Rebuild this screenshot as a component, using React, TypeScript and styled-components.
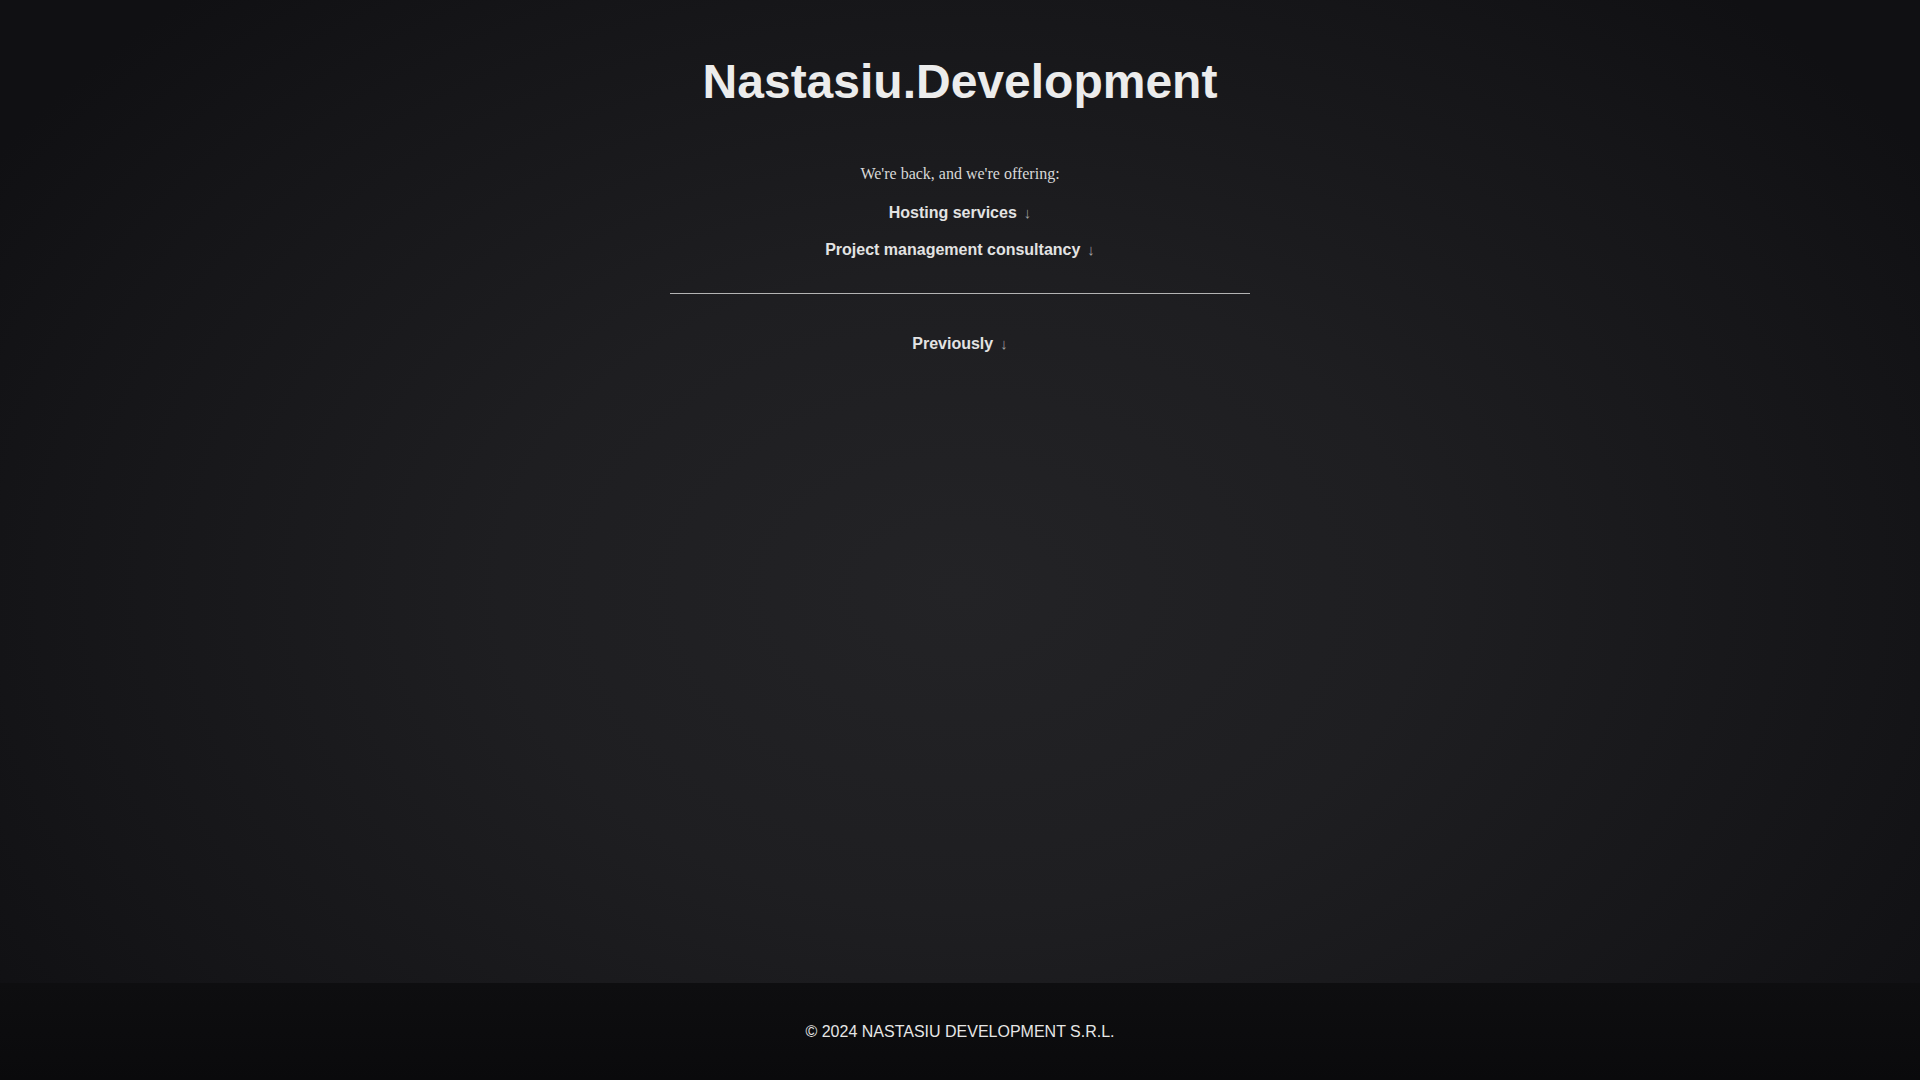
import React from "react";
import styled, { createGlobalStyle } from "styled-components";

const GlobalStyle = createGlobalStyle`
  html, body {
    margin: 0;
    padding: 0;
    height: 100%;
    background: #111114;
  }
  #root {
    min-height: 100vh;
  }
  * {
    box-sizing: border-box;
  }
`;

const Page = styled.div`
  min-height: 100vh;
  display: flex;
  flex-direction: column;
  font-family: "Liberation Sans", Arial, sans-serif;
`;

const Main = styled.main`
  flex: 1;
  display: flex;
  flex-direction: column;
  align-items: center;
  padding-top: 54px;
  background:
    radial-gradient(
      ellipse 1150px 800px at 50% 60%,
      #232326 0%,
      #1e1e21 40%,
      #151518 80%,
      #101013 100%
    );
`;

const Title = styled.h1`
  margin: 0;
  font-family: "Liberation Sans", Arial, sans-serif;
  font-weight: 700;
  font-size: 48px;
  line-height: 55px;
  color: #ececec;
`;

const Intro = styled.p`
  margin: 56px 0 0;
  font-family: "Liberation Serif", "Times New Roman", serif;
  font-size: 16px;
  line-height: 18px;
  color: #d8d8d8;
`;

const Toggle = styled.div<{ $gap: number }>`
  margin-top: ${(p) => p.$gap}px;
  display: flex;
  align-items: baseline;
  font-family: "Liberation Sans", Arial, sans-serif;
  font-weight: 700;
  font-size: 16px;
  line-height: 18px;
  color: #e3e3e3;
  cursor: pointer;
`;

const Arrow = styled.span`
  margin-left: 7px;
  font-weight: 400;
  font-size: 15px;
  line-height: 1;
  color: #a0a0a0;
`;

const Divider = styled.hr`
  width: 580px;
  margin: 34px 0 0;
  border: 0;
  height: 1px;
  background: #b4b4b4;
`;

const Footer = styled.footer`
  height: 97px;
  display: flex;
  align-items: center;
  justify-content: center;
  background: linear-gradient(#0e0e10, #0a0a0c);
  font-family: "Liberation Sans", Arial, sans-serif;
  font-size: 16px;
  line-height: 18px;
  color: #e6e6e6;
`;

const items = [
  { label: "Hosting services", gap: 21 },
  { label: "Project management consultancy", gap: 19 },
];

export default function App() {
  return (
    <>
      <GlobalStyle />
      <Page>
        <Main>
          <Title>Nastasiu.Development</Title>
          <Intro>We're back, and we're offering:</Intro>
          {items.map((it) => (
            <Toggle key={it.label} $gap={it.gap}>
              {it.label}
              <Arrow>↓</Arrow>
            </Toggle>
          ))}
          <Divider />
          <Toggle $gap={41}>
            Previously
            <Arrow>↓</Arrow>
          </Toggle>
        </Main>
        <Footer>© 2024 NASTASIU DEVELOPMENT S.R.L.</Footer>
      </Page>
    </>
  );
}
